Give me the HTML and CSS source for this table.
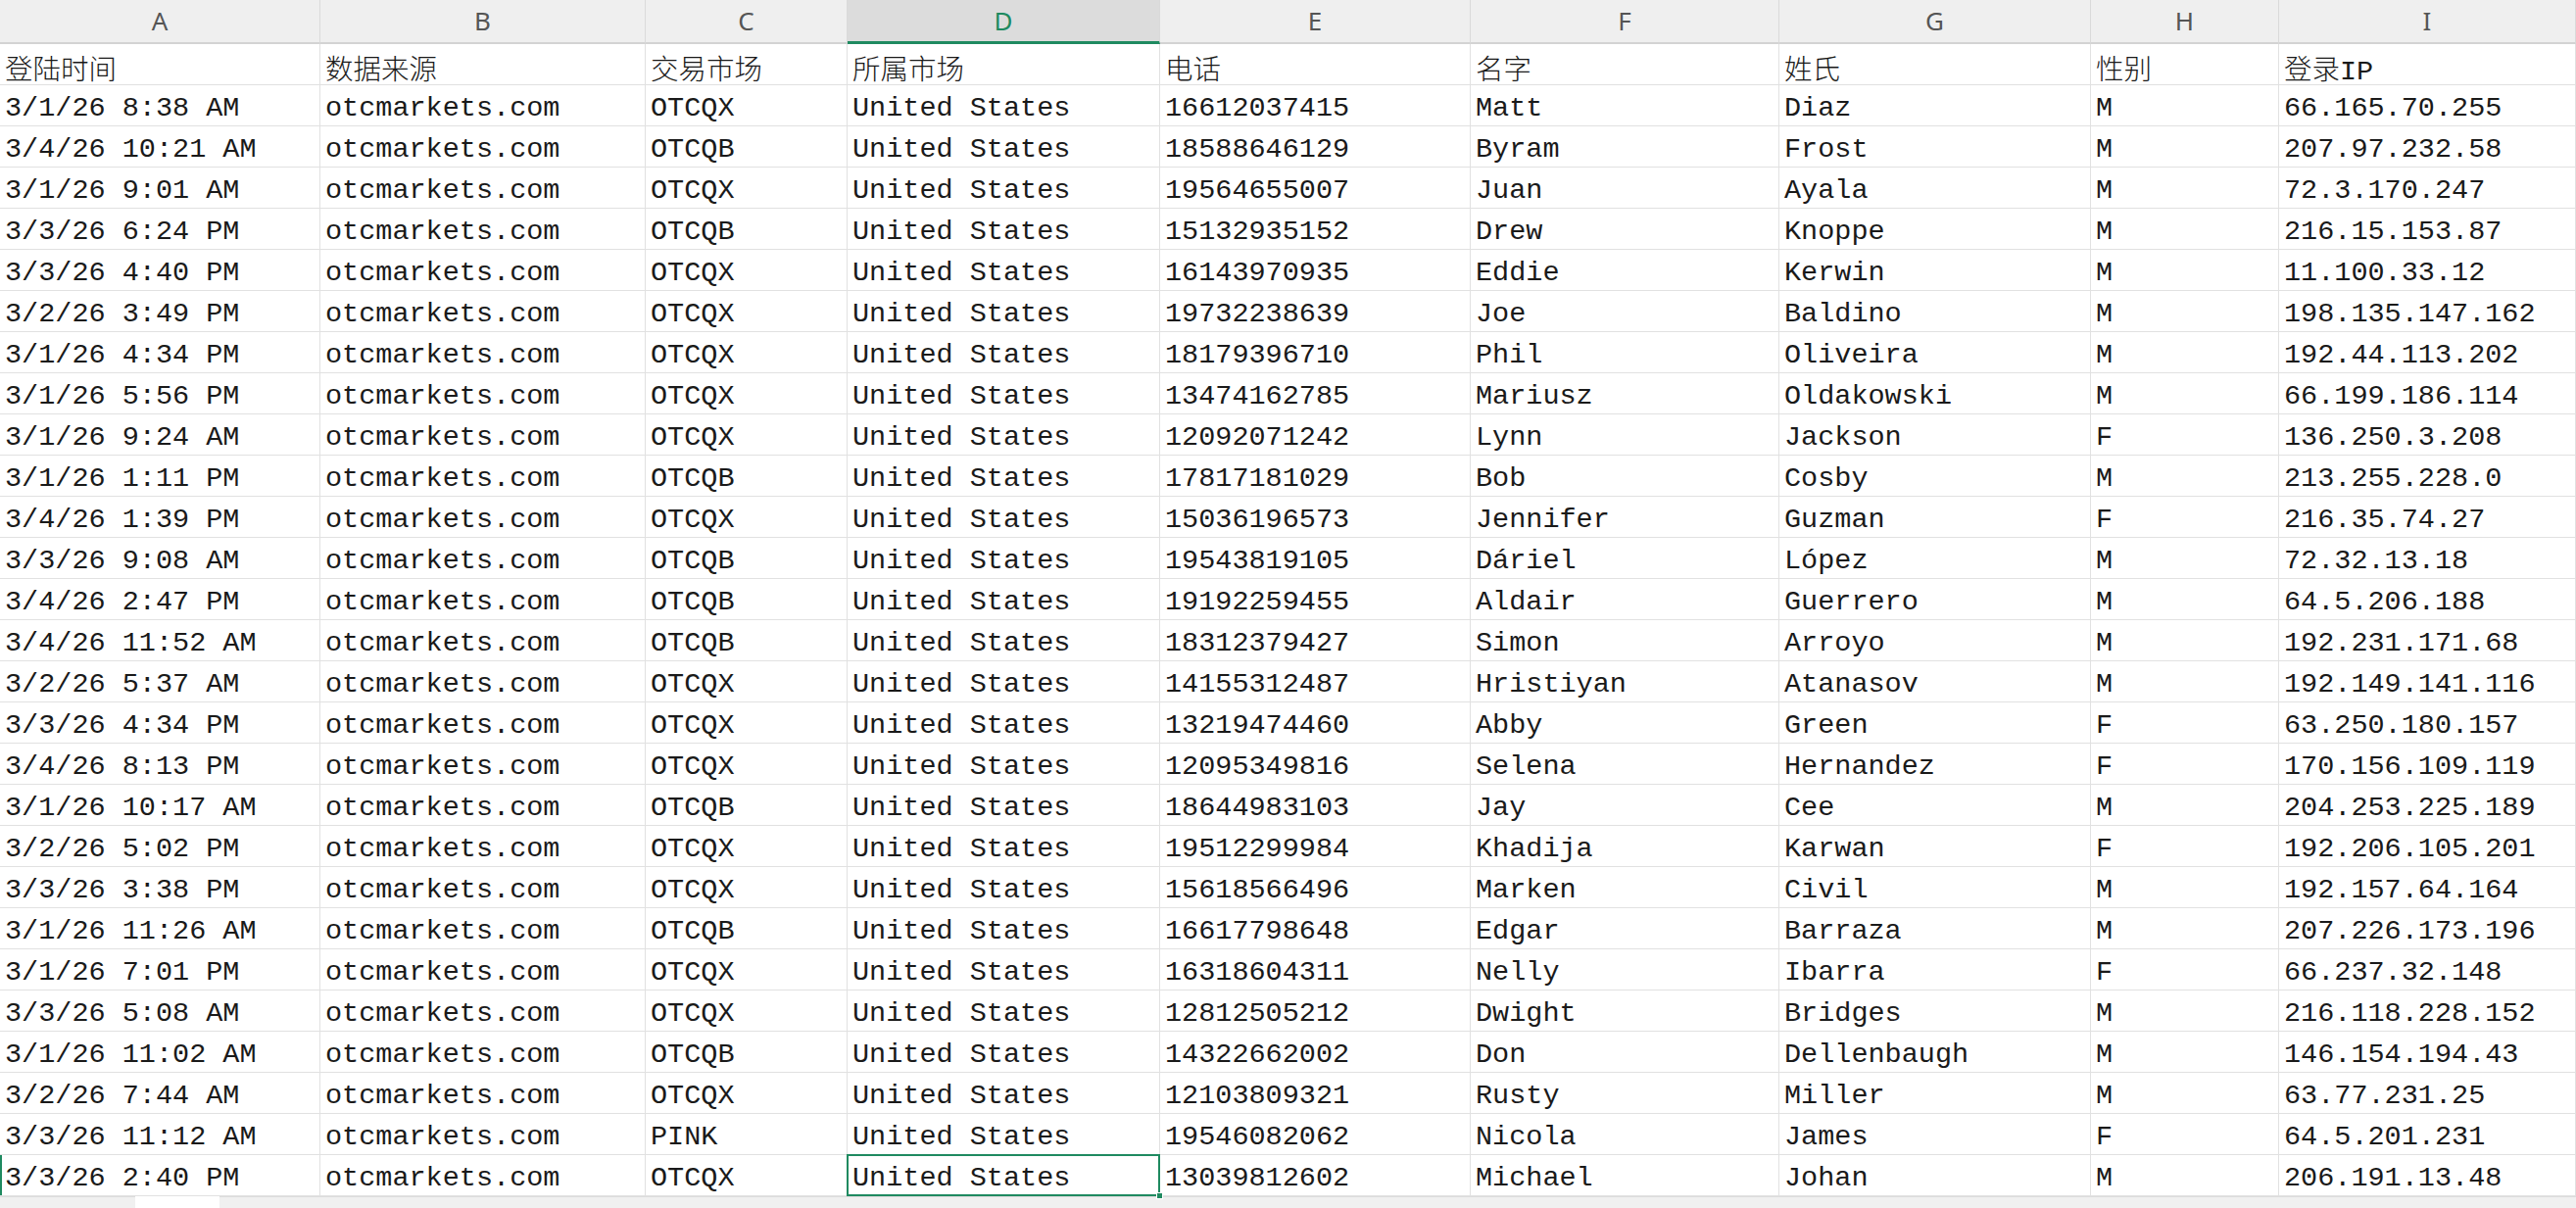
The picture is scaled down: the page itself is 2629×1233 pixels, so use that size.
FILE: index.html
```html
<!DOCTYPE html>
<html lang="zh-CN">
<head>
<meta charset="utf-8">
<title>Sheet</title>
<link rel="stylesheet" href="styles.css">
</head>
<body>
<div class="app">
  <div class="sheet">
    <div class="h">A</div><div class="h">B</div><div class="h">C</div><div class="h active">D</div><div class="h">E</div><div class="h">F</div><div class="h">G</div><div class="h">H</div><div class="h">I</div>

    <div class="c zh">登陆时间</div><div class="c zh">数据来源</div><div class="c zh">交易市场</div><div class="c zh">所属市场</div><div class="c zh">电话</div><div class="c zh">名字</div><div class="c zh">姓氏</div><div class="c zh">性别</div><div class="c zh">登录<span class="lat">IP</span></div>

    <div class="c">3/1/26 8:38 AM</div><div class="c">otcmarkets.com</div><div class="c">OTCQX</div><div class="c">United States</div><div class="c">16612037415</div><div class="c">Matt</div><div class="c">Diaz</div><div class="c">M</div><div class="c">66.165.70.255</div>
    <div class="c">3/4/26 10:21 AM</div><div class="c">otcmarkets.com</div><div class="c">OTCQB</div><div class="c">United States</div><div class="c">18588646129</div><div class="c">Byram</div><div class="c">Frost</div><div class="c">M</div><div class="c">207.97.232.58</div>
    <div class="c">3/1/26 9:01 AM</div><div class="c">otcmarkets.com</div><div class="c">OTCQX</div><div class="c">United States</div><div class="c">19564655007</div><div class="c">Juan</div><div class="c">Ayala</div><div class="c">M</div><div class="c">72.3.170.247</div>
    <div class="c">3/3/26 6:24 PM</div><div class="c">otcmarkets.com</div><div class="c">OTCQB</div><div class="c">United States</div><div class="c">15132935152</div><div class="c">Drew</div><div class="c">Knoppe</div><div class="c">M</div><div class="c">216.15.153.87</div>
    <div class="c">3/3/26 4:40 PM</div><div class="c">otcmarkets.com</div><div class="c">OTCQX</div><div class="c">United States</div><div class="c">16143970935</div><div class="c">Eddie</div><div class="c">Kerwin</div><div class="c">M</div><div class="c">11.100.33.12</div>
    <div class="c">3/2/26 3:49 PM</div><div class="c">otcmarkets.com</div><div class="c">OTCQX</div><div class="c">United States</div><div class="c">19732238639</div><div class="c">Joe</div><div class="c">Baldino</div><div class="c">M</div><div class="c">198.135.147.162</div>
    <div class="c">3/1/26 4:34 PM</div><div class="c">otcmarkets.com</div><div class="c">OTCQX</div><div class="c">United States</div><div class="c">18179396710</div><div class="c">Phil</div><div class="c">Oliveira</div><div class="c">M</div><div class="c">192.44.113.202</div>
    <div class="c">3/1/26 5:56 PM</div><div class="c">otcmarkets.com</div><div class="c">OTCQX</div><div class="c">United States</div><div class="c">13474162785</div><div class="c">Mariusz</div><div class="c">Oldakowski</div><div class="c">M</div><div class="c">66.199.186.114</div>
    <div class="c">3/1/26 9:24 AM</div><div class="c">otcmarkets.com</div><div class="c">OTCQX</div><div class="c">United States</div><div class="c">12092071242</div><div class="c">Lynn</div><div class="c">Jackson</div><div class="c">F</div><div class="c">136.250.3.208</div>
    <div class="c">3/1/26 1:11 PM</div><div class="c">otcmarkets.com</div><div class="c">OTCQB</div><div class="c">United States</div><div class="c">17817181029</div><div class="c">Bob</div><div class="c">Cosby</div><div class="c">M</div><div class="c">213.255.228.0</div>
    <div class="c">3/4/26 1:39 PM</div><div class="c">otcmarkets.com</div><div class="c">OTCQX</div><div class="c">United States</div><div class="c">15036196573</div><div class="c">Jennifer</div><div class="c">Guzman</div><div class="c">F</div><div class="c">216.35.74.27</div>
    <div class="c">3/3/26 9:08 AM</div><div class="c">otcmarkets.com</div><div class="c">OTCQB</div><div class="c">United States</div><div class="c">19543819105</div><div class="c">Dáriel</div><div class="c">López</div><div class="c">M</div><div class="c">72.32.13.18</div>
    <div class="c">3/4/26 2:47 PM</div><div class="c">otcmarkets.com</div><div class="c">OTCQB</div><div class="c">United States</div><div class="c">19192259455</div><div class="c">Aldair</div><div class="c">Guerrero</div><div class="c">M</div><div class="c">64.5.206.188</div>
    <div class="c">3/4/26 11:52 AM</div><div class="c">otcmarkets.com</div><div class="c">OTCQB</div><div class="c">United States</div><div class="c">18312379427</div><div class="c">Simon</div><div class="c">Arroyo</div><div class="c">M</div><div class="c">192.231.171.68</div>
    <div class="c">3/2/26 5:37 AM</div><div class="c">otcmarkets.com</div><div class="c">OTCQX</div><div class="c">United States</div><div class="c">14155312487</div><div class="c">Hristiyan</div><div class="c">Atanasov</div><div class="c">M</div><div class="c">192.149.141.116</div>
    <div class="c">3/3/26 4:34 PM</div><div class="c">otcmarkets.com</div><div class="c">OTCQX</div><div class="c">United States</div><div class="c">13219474460</div><div class="c">Abby</div><div class="c">Green</div><div class="c">F</div><div class="c">63.250.180.157</div>
    <div class="c">3/4/26 8:13 PM</div><div class="c">otcmarkets.com</div><div class="c">OTCQX</div><div class="c">United States</div><div class="c">12095349816</div><div class="c">Selena</div><div class="c">Hernandez</div><div class="c">F</div><div class="c">170.156.109.119</div>
    <div class="c">3/1/26 10:17 AM</div><div class="c">otcmarkets.com</div><div class="c">OTCQB</div><div class="c">United States</div><div class="c">18644983103</div><div class="c">Jay</div><div class="c">Cee</div><div class="c">M</div><div class="c">204.253.225.189</div>
    <div class="c">3/2/26 5:02 PM</div><div class="c">otcmarkets.com</div><div class="c">OTCQX</div><div class="c">United States</div><div class="c">19512299984</div><div class="c">Khadija</div><div class="c">Karwan</div><div class="c">F</div><div class="c">192.206.105.201</div>
    <div class="c">3/3/26 3:38 PM</div><div class="c">otcmarkets.com</div><div class="c">OTCQX</div><div class="c">United States</div><div class="c">15618566496</div><div class="c">Marken</div><div class="c">Civil</div><div class="c">M</div><div class="c">192.157.64.164</div>
    <div class="c">3/1/26 11:26 AM</div><div class="c">otcmarkets.com</div><div class="c">OTCQB</div><div class="c">United States</div><div class="c">16617798648</div><div class="c">Edgar</div><div class="c">Barraza</div><div class="c">M</div><div class="c">207.226.173.196</div>
    <div class="c">3/1/26 7:01 PM</div><div class="c">otcmarkets.com</div><div class="c">OTCQX</div><div class="c">United States</div><div class="c">16318604311</div><div class="c">Nelly</div><div class="c">Ibarra</div><div class="c">F</div><div class="c">66.237.32.148</div>
    <div class="c">3/3/26 5:08 AM</div><div class="c">otcmarkets.com</div><div class="c">OTCQX</div><div class="c">United States</div><div class="c">12812505212</div><div class="c">Dwight</div><div class="c">Bridges</div><div class="c">M</div><div class="c">216.118.228.152</div>
    <div class="c">3/1/26 11:02 AM</div><div class="c">otcmarkets.com</div><div class="c">OTCQB</div><div class="c">United States</div><div class="c">14322662002</div><div class="c">Don</div><div class="c">Dellenbaugh</div><div class="c">M</div><div class="c">146.154.194.43</div>
    <div class="c">3/2/26 7:44 AM</div><div class="c">otcmarkets.com</div><div class="c">OTCQX</div><div class="c">United States</div><div class="c">12103809321</div><div class="c">Rusty</div><div class="c">Miller</div><div class="c">M</div><div class="c">63.77.231.25</div>
    <div class="c">3/3/26 11:12 AM</div><div class="c">otcmarkets.com</div><div class="c">PINK</div><div class="c">United States</div><div class="c">19546082062</div><div class="c">Nicola</div><div class="c">James</div><div class="c">F</div><div class="c">64.5.201.231</div>
    <div class="c rowmark">3/3/26 2:40 PM</div><div class="c">otcmarkets.com</div><div class="c">OTCQX</div><div class="c sel">United States</div><div class="c">13039812602</div><div class="c">Michael</div><div class="c">Johan</div><div class="c">M</div><div class="c">206.191.13.48</div>
  </div>
  <div class="tabs">
    <div class="tab"></div>
  </div>
</div>
</body>
</html>
```

FILE: styles.css
```css
html, body {
  margin: 0;
  padding: 0;
  background: #ffffff;
}

body {
  width: 2629px;
  height: 1233px;
  overflow: hidden;
}

.app {
  display: flex;
  flex-direction: column;
  height: 1233px;
}

.sheet {
  display: grid;
  grid-template-columns: 327px 332px 206px 319px 317px 315px 318px 192px 1fr;
  grid-auto-rows: 42px;
  grid-template-rows: 45px;
  background: #ffffff;
}

.h {
  box-sizing: border-box;
  height: 45px;
  background: #efefef;
  border-right: 1px solid #dadada;
  border-bottom: 2px solid #d3d3d3;
  color: #555555;
  font-family: "Noto Sans", "Open Sans", sans-serif;
  font-size: 26px;
  line-height: 43px;
  text-align: center;
}

.h.active {
  background: #dcdcdc;
  color: #1f8a60;
  border-bottom: 3px solid #1f8a60;
}

.c {
  box-sizing: border-box;
  height: 42px;
  border-right: 1px solid #e1e1e1;
  border-bottom: 1px solid #e1e1e1;
  padding: 7px 0 0 5px;
  font-family: "Liberation Mono", "Noto Sans CJK SC", monospace;
  font-size: 28.5px;
  font-weight: 400;
  line-height: 33px;
  color: #1a1a1a;
  white-space: nowrap;
}

.c.zh {
  font-family: "Noto Sans CJK SC", "Liberation Mono", sans-serif;
  font-weight: 300;
}

.c .lat {
  font-family: "Liberation Mono", monospace;
  font-weight: 400;
}

.rowmark {
  box-shadow: inset 2px 0 0 #1f8a60;
}

.sel {
  position: relative;
}

.sel::after {
  content: "";
  position: absolute;
  left: -1px;
  top: -1px;
  right: -1px;
  bottom: -1px;
  border: 2px solid #1f8a60;
}

.sel::before {
  content: "";
  position: absolute;
  right: -4px;
  bottom: -4px;
  width: 5px;
  height: 5px;
  background: #1f8a60;
  border: 1px solid #ffffff;
  z-index: 2;
}

.tabs {
  flex: 1;
  display: flex;
  background: #f0f0f0;
  border-top: 1px solid #dcdcdc;
}

.tab {
  margin-left: 138px;
  width: 86px;
  margin-top: -1px;
  background: #ffffff;
}
```
